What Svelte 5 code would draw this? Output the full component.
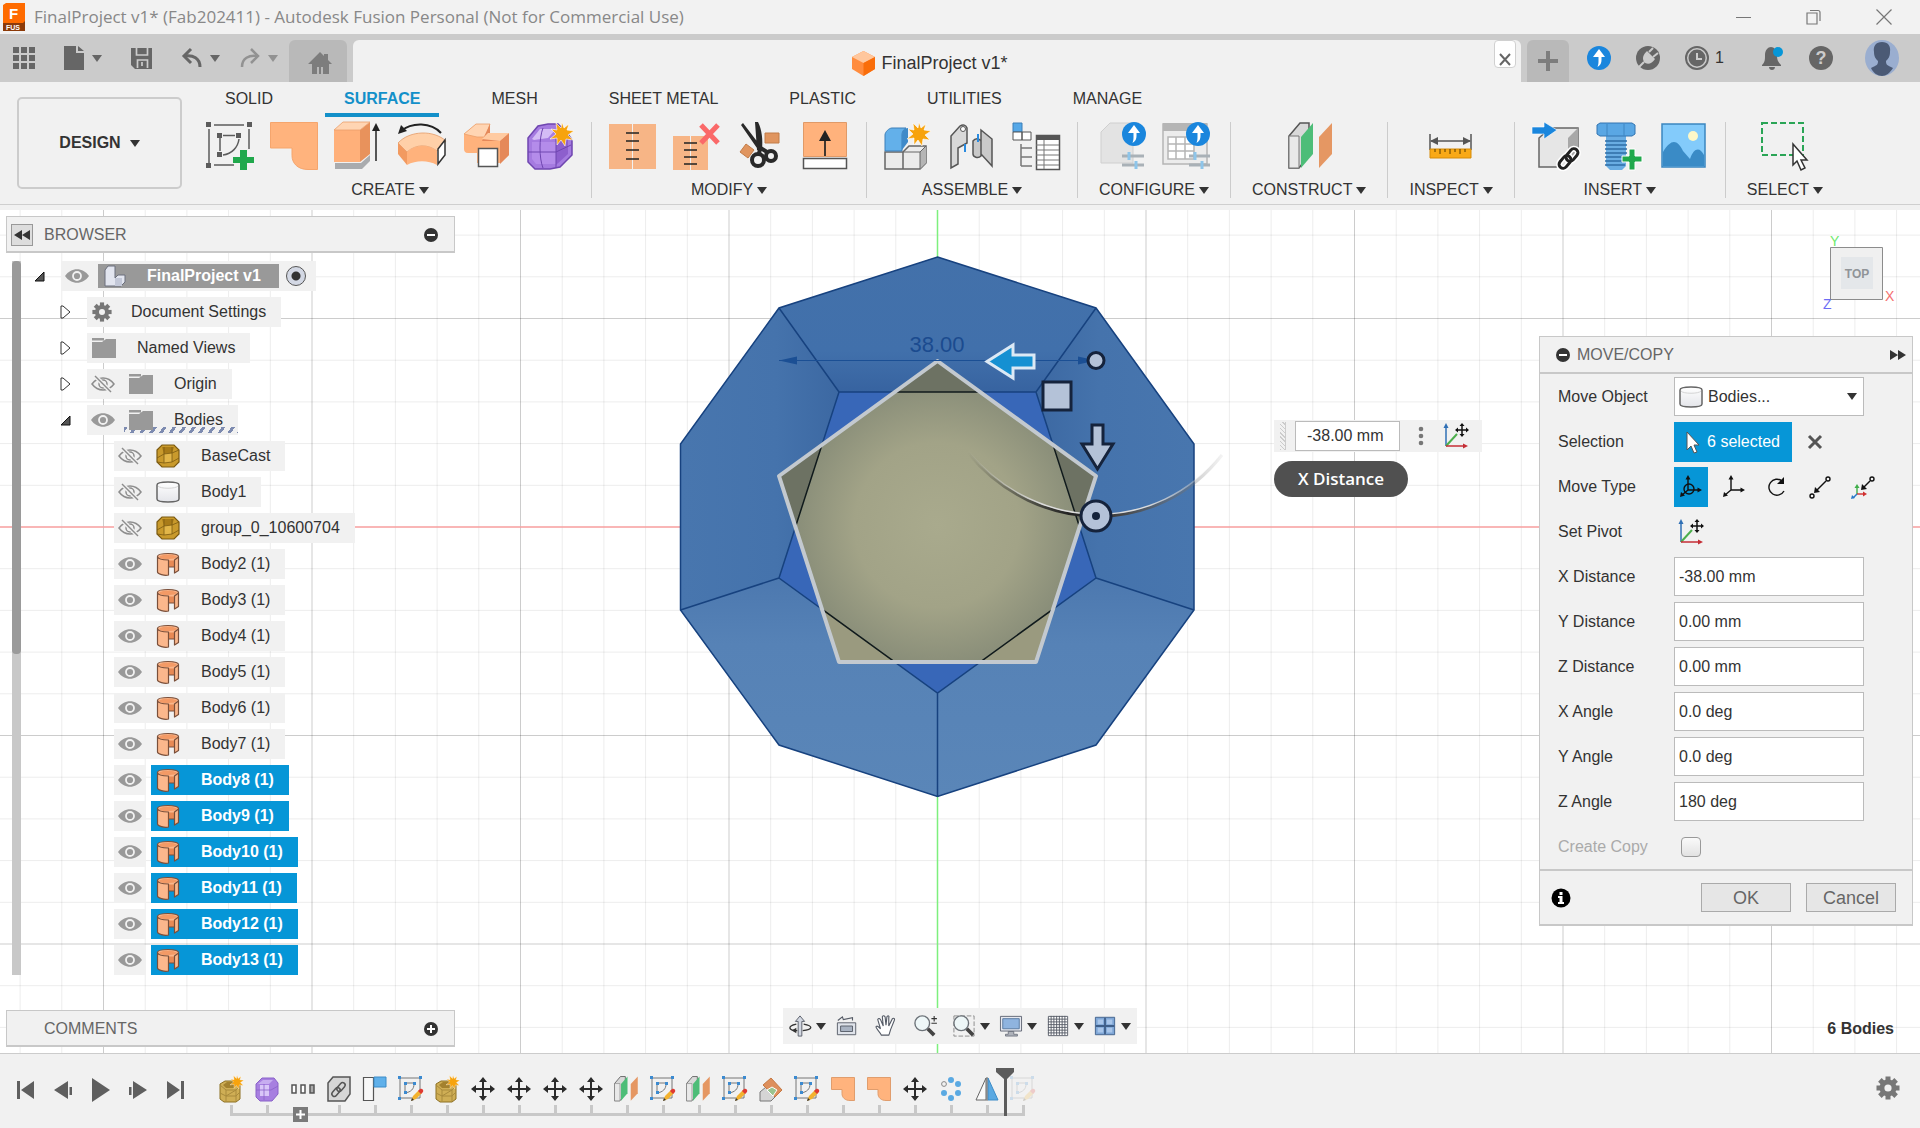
<script>
	const tabs = ['SOLID', 'SURFACE', 'MESH', 'SHEET METAL', 'PLASTIC', 'UTILITIES', 'MANAGE'];
	let activeTab = $state('SURFACE');

	const groups = [
		{ name: 'CREATE', tools: ['sketch', 'patch', 'extrude', 'revolve', 'loft', 'form'] },
		{ name: 'MODIFY', tools: ['stitch', 'unstitch', 'trim', 'extend'] },
		{ name: 'ASSEMBLE', tools: ['component', 'joint', 'bom'] },
		{ name: 'CONFIGURE', tools: ['config', 'configTable'] },
		{ name: 'CONSTRUCT', tools: ['plane'] },
		{ name: 'INSPECT', tools: ['measure'] },
		{ name: 'INSERT', tools: ['derive', 'fastener', 'decal'] },
		{ name: 'SELECT', tools: ['select'] }
	];

	const tree = [
		{ name: 'Document Settings', level: 1, arrow: 'closed', icon: 'gear' },
		{ name: 'Named Views', level: 1, arrow: 'closed', icon: 'folder' },
		{ name: 'Origin', level: 1, arrow: 'closed', eye: 'off', icon: 'folder' },
		{ name: 'Bodies', level: 1, arrow: 'open', eye: 'on', icon: 'folder', marked: true },
		{ name: 'BaseCast', level: 2, eye: 'off', icon: 'mesh' },
		{ name: 'Body1', level: 2, eye: 'off', icon: 'solid' },
		{ name: 'group_0_10600704', level: 2, eye: 'off', icon: 'mesh' },
		...Array.from({ length: 12 }, (_, i) => ({
			name: `Body${i + 2} (1)`,
			level: 2,
			eye: 'on',
			icon: 'surface',
			selected: i >= 6
		}))
	];

	const moveTypes = ['free', 'translate', 'rotate', 'pointToPoint', 'pointToPosition'];
	let moveType = $state('free');

	let fields = $state([
		{ id: 'x-distance', label: 'X Distance', value: '-38.00 mm' },
		{ id: 'y-distance', label: 'Y Distance', value: '0.00 mm' },
		{ id: 'z-distance', label: 'Z Distance', value: '0.00 mm' },
		{ id: 'x-angle', label: 'X Angle', value: '0.0 deg' },
		{ id: 'y-angle', label: 'Y Angle', value: '0.0 deg' },
		{ id: 'z-angle', label: 'Z Angle', value: '180 deg' }
	]);

	const navTools = [
		{ name: 'orbit', menu: true },
		{ name: 'lookat' },
		{ name: 'pan' },
		{ name: 'zoom' },
		{ name: 'fit', menu: true },
		{ name: 'display', menu: true },
		{ name: 'grid', menu: true },
		{ name: 'views', menu: true }
	];

	const playback = ['first', 'prev', 'play', 'next', 'last'];

	const timeline = [
		'meshNew', 'formSmall', 'group', 'link', 'flag', 'sketchEdit', 'meshNew',
		'move', 'move', 'move', 'move', 'planeSmall', 'sketchEdit', 'planeSmall',
		'sketchEdit', 'replace', 'sketchEdit', 'patchSmall', 'patchSmall', 'move',
		'pattern', 'mirror', 'sketchEdit'
	];

	// grid lines run from the origin outwards, every fifth one is a major line
	const step = 41.7;
	const lines = Array.from({ length: 81 }, (_, i) => i - 40);
</script>

{#snippet caret()}
	<span class="caret"></span>
{/snippet}

{#snippet star(x, y, r)}
	<g transform="translate({x} {y}) scale({r / 12})">
		<path d="M0-12 2-6 7-10 5-4 12-3 6 1 11 6 4 5 3 12-1 6-5 11-5 4-12 5-6 0-11-5-5-4-6-11-1-6z" fill="#f7a30d" stroke="#fff" stroke-width="0.6" />
	</g>
{/snippet}

{#snippet tool(name)}
	<svg width="48" height="48" viewBox="0 0 48 48" aria-hidden="true">
		{#if name === 'sketch'}
			<path d="M3 7v34M8 3h30M43 7v20M8 43h20M14 15v14M17 13.500h12M33 17c-1 8-7 15-16 16" fill="none" stroke="#5c5c5c" stroke-width="1.500" />
			<path d="M0 0h5v5H0zM41 0h5v5h-5zM0 41h5v5H0zM11 11h5v5h-5zM30 11h5v5h-5zM11 30h5v5h-5z" fill="#5c5c5c" />
			<path d="M34 28h7v7h7v6h-7v7h-7v-7h-7v-6h7z" fill="#20a84c" />
		{:else if name === 'patch'}
			<path d="M.5.5h47v47H38c-10 0-16-6-16-14V26H.5z" fill="#ffb37d" stroke="#f5a56d" />
		{:else if name === 'extrude'}
			<path d="M1 41h26l9-8v6l-8 8H1z" fill="#a9abae" />
			<path d="M0 8h26v32H0z" fill="#ffb07a" />
			<path d="M26 8 36 0v32l-10 8z" fill="#e8925c" />
			<path d="M0 8 9 0h27l-10 8z" fill="#ffd5b3" stroke="#eb9f6b" stroke-width=".8" />
			<path d="M42 39V6" stroke="#222" stroke-width="1.500" />
			<path d="M42 1l4 8h-8z" fill="#222" />
		{:else if name === 'revolve'}
			<path d="M0 21c12-13 36-13 48-2l-9 10C30 22 18 22 9 30z" fill="#ffd0a8" stroke="#e59a66" stroke-width=".8" />
			<path d="M9 30c9-8 21-8 30-1v14c-9-5-21-5-30 0z" fill="#ffb27c" />
			<path d="M0 21l9 9v13l-9-11z" fill="#f29a60" />
			<path d="M40 27l7-9v15l-7 9z" fill="#fff" stroke="#333" stroke-width="1.500" />
			<path d="M3 9C14 0 33 0 43 11" fill="none" stroke="#222" stroke-width="2" />
			<path d="M0 12 3 3l6 6z" fill="#222" />
		{:else if name === 'loft'}
			<path d="M2 12 14 2h14l-4 12h14l9-3v22l-9 8H15V31H6c-3 0-4-2-4-4z" fill="#ffb27c" />
			<path d="M2 12 14 2h14l-4 12 4 1H15z" fill="#ffd5b3" stroke="#eb9f6b" stroke-width=".8" />
			<path d="M28 2v9l-6 6h18l7-6v22l-9 9V19H20z" fill="#e5895a" />
			<path d="M20 17 26 11h21l-9 8z" fill="#ffcba2" />
			<path d="M16.500 26.500h19v18h-19z" fill="#fff" stroke="#555" stroke-width="1.500" />
		{:else if name === 'form'}
			<path d="M2 16 12 4l10-2h10l10 10 4 6v15l-12 12-10 2H9L2 40z" fill="#a57be0" stroke="#6f46b0" stroke-width="1.500" />
			<path d="M6 17 14 7h16l-8 9-14 2z" fill="#d4bcf5" />
			<path d="M6 20h24v22H10l-4-5z" fill="#b48cea" />
			<path d="M30 18l12-4v18L30 43" fill="#8d5fcd" />
			<path d="M2 30h28l15-7M17 6c-4 10-4 30 0 40M30 16v30" fill="none" stroke="#6f46b0" />
			{@render star(36, 12, 12)}
		{:else if name === 'stitch'}
			<path d="M0 2h23v45H0zM24 2h23v45H24z" fill="#f7b586" />
			<path d="M17 11h13M17 19h13M17 28h13M17 37h13" stroke="#222" stroke-width="1.700" />
		{:else if name === 'unstitch'}
			<path d="M0 14h17v34H0zM18 14h17v34H18z" fill="#f7b586" />
			<path d="M11 21h13M11 28h13M11 35h13M11 42h13" stroke="#222" stroke-width="1.700" />
			<path d="M28 3 45 21M45 3 28 21" stroke="#fa6969" stroke-width="5" />
		{:else if name === 'trim'}
			<path d="M28 11h14v10H28z" fill="#e0955f" stroke="#c27c48" />
			<path d="M9 22l8 6-6 8-8-6z" fill="#e0955f" stroke="#c27c48" />
			<path d="M18 0h3c4 8 5 18 4 28h-5zM4 3l2-2 16 21v7z" fill="#292929" />
			<circle cx="21" cy="38" r="6" fill="none" stroke="#292929" stroke-width="4" />
			<circle cx="34" cy="34" r="5" fill="none" stroke="#292929" stroke-width="4" />
			<path d="M22 25l8 5M23 25l-1 8" stroke="#292929" stroke-width="4" />
		{:else if name === 'extend'}
			<path d="M2.500.5h43v34h-43z" fill="#ffb27c" stroke="#e09a68" />
			<path d="M2.500 36.500h43v10h-43z" fill="#fff" stroke="#555" stroke-width="1.500" />
			<path d="M24 34V14" stroke="#222" stroke-width="1.700" />
			<path d="M24 8l6 11H18z" fill="#222" />
		{:else if name === 'component'}
			<path d="M1 30h18v17H1zM19 30l6-6h17v17l-6 6H19z" fill="#ebebeb" stroke="#666" stroke-width="1.500" />
			<path d="M36 30l6-6v17l-6 6z" fill="#b5b5b5" />
			<path d="M19 30h17v17M36 30l6-6" fill="none" stroke="#666" />
			<path d="M1 29V13c0-3 4-7 7-7h14c-3 2-4 4-4 7v16z" fill="#63b0ea" stroke="#3c7fb8" />
			<path d="M18 13c0-4 2-7 6-7v14l-6 8z" fill="#3f8ac9" />
			{@render star(35, 12, 12)}
		{:else if name === 'joint'}
			<path d="M3 40V14L12 4c3-2 6-1 7 2v15l-9 5v16l-7 4z" fill="#d8d8d8" stroke="#555" stroke-width="1.500" />
			<path d="M44 44 33 32V8l11 9zM33 34c-3 3-8 1-8-2V19c2-3 6-3 8 0z" fill="#c9c9c9" stroke="#555" stroke-width="1.500" />
			<path d="M17 22v8M30 12v8" stroke="#2a8be0" stroke-width="2" />
			<circle cx="15" cy="7" r="2.500" fill="#fff" stroke="#555" />
		{:else if name === 'bom'}
			<path d="M1 1h9v9H1z" fill="#55a8e8" stroke="#3c7fb8" />
			<path d="M1 10h9v8H1zM10 10h9v8h-9z" fill="#fff" stroke="#555" />
			<path d="M9 22v22M9 26h11M9 35h11M9 44h11" stroke="#777" stroke-width="1.500" fill="none" />
			<path d="M24.500 13.500h23v34h-23z" fill="#fff" stroke="#555" stroke-width="1.500" />
			<path d="M24 13h24v5H24z" fill="#555" />
			<path d="M32 18v29M24 23h23M24 28h23M24 33h23M24 38h23M24 43h23" stroke="#777" />
		{:else if name === 'config'}
			<path d="M3 10 12 1h29l-6 9v31H3z" fill="#e3e3e3" stroke="#cfcfcf" />
			<path d="M24 34h22M24 43h22" stroke="#a9b1b7" stroke-width="3" />
			<path d="M31 30v8M38 39v8" stroke="#8ec5ea" stroke-width="3" />
			{@render update(36, 12)}
		{:else if name === 'configTable'}
			<path d="M1 2h44v40H1z" fill="#ececec" stroke="#b5b5b5" stroke-width="1.500" />
			<path d="M1 1h44v8H1z" fill="#b5b5b5" />
			<path d="M6 15h26v22H6zM6 22h26M6 29h26M14 15v22M23 15v22" fill="#fff" stroke="#b5b5b5" stroke-width="1.500" />
			<path d="M27 34h21M27 43h21" stroke="#a9b1b7" stroke-width="3" />
			<path d="M33 30v8M40 39v8" stroke="#8ec5ea" stroke-width="3" />
			{@render update(36, 12)}
		{:else if name === 'plane'}
			<g transform="translate(3)">{@render planeShape()}</g>
		{:else if name === 'measure'}
			<path d="M3 12v16M44 12v16M4 19h39" stroke="#555" stroke-width="1.500" />
			<path d="M3 19l8-4v8zM44 19l-8-4v8z" fill="#555" />
			<path d="M3 27h41v9H3z" fill="#f9a916" stroke="#d58b08" />
			<path d="M8 27v3M13 27v5M18 27v3M23 27v5M28 27v3M33 27v5M38 27v3" stroke="#553a00" />
		{:else if name === 'derive'}
			<path d="M7 16 18 6h28v29l-10 10H7z" fill="#e6e6e6" stroke="#666" stroke-width="1.500" />
			<path d="M36 16 46 6v29L36 45z" fill="#a8a8a8" />
			<path d="M0 5h12V0l13 8-13 9v-5H0z" fill="#1a86dd" stroke="#fff" stroke-width=".6" />
			<g fill="none" stroke="#fff" stroke-width="6"><rect x="-7" y="-4" width="14" height="8" rx="4" transform="translate(33 40) rotate(-50)" /><rect x="-7" y="-4" width="14" height="8" rx="4" transform="translate(40 33) rotate(-50)" /></g>
			<g fill="none" stroke="#222" stroke-width="3"><rect x="-7" y="-4" width="14" height="8" rx="4" transform="translate(33 40) rotate(-50)" /><rect x="-7" y="-4" width="14" height="8" rx="4" transform="translate(40 33) rotate(-50)" /></g>
		{:else if name === 'fastener'}
			<path d="M10 14h20v30l-4 4H14l-4-4z" fill="#69ade3" />
			<path d="M9 19h22M9 23h22M9 27h22M9 31h22M9 35h22M9 39h22M9 43h20" stroke="#2f6da6" stroke-width="1.500" />
			<path d="M1 3l3-2h32l3 2v9l-3 2H4l-3-2z" fill="#5aa7e4" stroke="#3375b1" />
			<path d="M11 2v12M28 2v12" stroke="#3f86c2" />
			<path d="M33 27h6v7h7v6h-7v8h-6v-8h-7v-6h7z" fill="#20a84c" stroke="#fff" stroke-width="1" />
		{:else if name === 'decal'}
			<path d="M2 2h43v43H2z" fill="#83cbfb" stroke="#3b86c0" stroke-width="1.500" />
			<path d="M3 30c8-13 14-13 20-1l7 8c4-12 10-12 14-4v11H3z" fill="#3a8bc6" />
			<circle cx="33" cy="14" r="5" fill="#fdf8c8" />
		{:else if name === 'select'}
			<path d="M1 1h41v32H1z" fill="none" stroke="#2aa556" stroke-width="2" stroke-dasharray="6 3" />
			<path d="M32 22v21l4-4 4 9 4-2-4-8h6z" fill="#fff" stroke="#333" stroke-width="1.500" />
		{/if}
	</svg>
{/snippet}

{#snippet update(x, y)}
	<circle cx={x} cy={y} r="12" fill="#1a86dd" />
	<path d="M{x} {y - 9}l6 8h-3.500v3c0 3-1 5-4 7 1-3 1-4 1-7v-3h-5.500z" fill="#fff" />
{/snippet}

{#snippet planeShape()}
	<path d="M1 14 12 1h9v32L11 46H1z" fill="#d9d9d9" stroke="#555" stroke-width="1.500" />
	<path d="M1 14h10v32H1z" fill="#e9e9e9" stroke="#777" />
	<path d="M13 15 25 1v31L13 46z" fill="#4dbd78" />
	<path d="M31 15 44 1v31L31 46z" fill="#e59763" />
{/snippet}

{#snippet gear(size)}
	<svg width={size} height={size} viewBox="-12 -12 24 24" aria-hidden="true">
		<g fill="#777">
			{#each [0, 45, 90, 135] as angle}
				<rect x="-2.500" y="-11.500" width="5" height="23" transform="rotate({angle})" />
			{/each}
			<circle r="8.500" />
		</g>
		<circle r="3.600" fill="#f1f1f1" />
	</svg>
{/snippet}

{#snippet eye(kind)}
	<svg width="24" height="20" viewBox="0 0 24 20" aria-hidden="true">
		{#if kind === 'on'}
			<path d="M0 10C6 1 18 1 24 10 18 19 6 19 0 10z" fill="#999" />
			<circle cx="12" cy="10" r="4" fill="none" stroke="#f1f1f1" stroke-width="1.800" />
		{:else}
			<path d="M1 10C7 2 17 2 23 10 17 18 7 18 1 10z" fill="none" stroke="#8d8d8d" stroke-width="1.500" />
			<circle cx="12" cy="10" r="4" fill="none" stroke="#8d8d8d" stroke-width="1.500" />
			<path d="M4 2l16 16" stroke="#f1f1f1" stroke-width="4" />
			<path d="M4 2l16 16" stroke="#8d8d8d" stroke-width="1.500" />
		{/if}
	</svg>
{/snippet}

{#snippet nodeIcon(name)}
	{#if name === 'gear'}
		{@render gear(20)}
	{:else}
		<svg width="24" height="24" viewBox="0 0 24 24" aria-hidden="true">
			{#if name === 'folder'}
				<path d="M0 2h12v2.500H0zM0 6h10l4-3h10v19H0z" fill="#999" />
			{:else if name === 'mesh'}
				<path d="M1 6 6 1h12l5 5v12l-5 5H6l-5-5z" fill="#c99a2c" stroke="#7b5a12" stroke-width="1.200" />
				<path d="M6 3h12l-2 6-8 1z" fill="#a87b18" />
				<path d="M8 10l8-1v9l-8 1z" fill="#e2b649" />
				<path d="M8 3v16M16 3v15M1 14l7-4 8-1 7-3M1 18l7 1 8-1 7-4" stroke="#7b5a12" stroke-width=".8" fill="none" />
			{:else if name === 'solid'}
				{@render solidShape()}
			{:else}
				<path d="M1.500 4.500c0-4 21-4 21 0v14l-4 2.500v-6h-6v8c-4 1-11-1-11-3z" fill="#fbb78c" />
				<path d="M12.500 8.500h6V15h-6z" fill="#e88a55" />
				<path d="M3 5c2-3 16-3 18 0-1 1-4 2-8 2C8 7 4 7 3 5z" fill="#f39a66" />
				<path d="M1.500 4.500c0-4 21-4 21 0v14l-4 2.500V8l4-3M1.500 4.500C2 7 8 8 12.500 8v15c-4 1-11-1-11-3zM12.500 15h6" fill="none" stroke="#7a4f3a" stroke-width="1.200" stroke-linejoin="round" />
			{/if}
		</svg>
	{/if}
{/snippet}

{#snippet solidShape()}
	<defs>
		<linearGradient id="cyl" x1="0" x2="0" y1="0" y2="1">
			<stop offset="0" stop-color="#fff" />
			<stop offset="1" stop-color="#e4e5ea" />
		</linearGradient>
	</defs>
	<path d="M1 5c0-4 22-4 22 0v14c0 4-22 4-22 0z" fill="url(#cyl)" stroke="#666" stroke-width="1.500" />
	<path d="M2 6c2 3 18 3 20 0" fill="none" stroke="#d5d5d5" />
{/snippet}

{#snippet axes()}
	<svg width="28" height="26" viewBox="0 0 28 26" aria-hidden="true">
		<path d="M4 23V4" stroke="#2f6fb5" stroke-width="1.500" />
		<path d="M4 0l2.500 5h-5z" fill="#2f6fb5" />
		<path d="M4 23 15 11" stroke="#4cae4c" stroke-width="2" />
		<path d="M4 23h18" stroke="#c42d35" stroke-width="1.500" />
		<path d="M26 23l-5-2.500v5z" fill="#c42d35" />
		<path d="M20 1v12M14 7h12" stroke="#111" stroke-width="1.500" />
		<path d="M20 0l2.500 3h-5zM20 14l2.500-3h-5zM13 7l3-2.500v5zM27 7l-3-2.500v5z" fill="#111" />
	</svg>
{/snippet}

{#snippet typeIcon(name)}
	<svg width="24" height="26" viewBox="0 0 24 26" aria-hidden="true">
		<g fill="none" stroke="#111" stroke-width="1.400">
			{#if name === 'free' || name === 'translate'}
				<path d="M9 16V4M9 16h11M9 16l-6 5" />
				<path d="M9 1l2.500 4.500h-5zM23 16l-4.500-2.500v5zM1 23l1-5 4 3.500z" fill="#111" stroke="none" />
				{#if name === 'free'}
					<circle cx="10" cy="15" r="5" />
				{/if}
			{:else if name === 'rotate'}
				<path d="M17 7A8 8 0 1 0 19 17" />
				<path d="M19 3v7h-7z" fill="#111" stroke="none" />
			{:else if name === 'pointToPoint'}
				<circle cx="20" cy="5" r="2" />
				<circle cx="4" cy="22" r="2" />
				<path d="M18 7 9 16" />
				<path d="M6 19l1-6 5 5z" fill="#111" stroke="none" />
			{:else}
				<circle cx="21" cy="5" r="2" />
				<path d="M19 7l-6 6" />
				<path d="M10 16l1-6 5 5z" fill="#111" stroke="none" />
				<path d="M6 12v8" stroke="#3fae49" />
				<path d="M6 10l2.500 4h-5z" fill="#3fae49" stroke="none" />
				<path d="M6 20h7" stroke="#d03030" />
				<path d="M16 20l-4-2.500v5z" fill="#d03030" stroke="none" />
				<path d="M6 20l-4 4" stroke="#2878c8" />
				<path d="M0 25l1-4 3 3z" fill="#2878c8" stroke="none" />
			{/if}
		</g>
	</svg>
{/snippet}

{#snippet navIcon(name)}
	<svg width="22" height="24" viewBox="0 0 24 24" aria-hidden="true">
		{#if name === 'orbit'}
			<path d="M10 23V7H7l5-6 5 6h-3v16z" fill="#d3d8e2" stroke="#555b66" />
			<path d="M8 10C-2 12-1 17 9 17M15 17c11-1 12-5 1-7" fill="none" stroke="#333" stroke-width="1.500" />
			<path d="M3 17l5-3v6z" fill="#333" />
		{:else if name === 'lookat'}
			<path d="M1.500 8.500h20v13h-20z" fill="#dfe3ea" stroke="#555b66" />
			<path d="M5 12h13v6H5z" fill="#a9b3c2" stroke="#555b66" />
			<path d="M2 6l5-4 1 3 10-2v3" fill="none" stroke="#555b66" stroke-width="1.200" />
		{:else if name === 'pan'}
			<path d="M7 22c-2-4-5-6-6-9 1-2 3 0 5 2L3 5c1-2 2-1 3 0l3 7L8 2c1-2 2-1 3 0l1 9 1-9c1-2 3-1 2 1l0 9 4-8c1-1 3 0 2 2l-4 10c-1 3-1 4-2 6z" fill="#fff" stroke="#555b66" stroke-width="1.200" />
		{:else if name === 'zoom' || name === 'fit'}
			{#if name === 'fit'}
				<path d="M1 1h22v22H1z" fill="none" stroke="#888" stroke-dasharray="5 2" />
			{/if}
			<path d="M15 15l7 7" stroke="#444" stroke-width="4" />
			<circle cx="9" cy="9" r="8" fill="#eef7f8" stroke="#6c7278" stroke-width="1.500" />
			{#if name === 'zoom'}
				<path d="M19 4h6M22 1v6M19 9h6" stroke="#333" stroke-width="1.200" />
			{/if}
		{:else if name === 'display'}
			<path d="M.5 1.500h23v16H.5z" fill="#e6e8ef" stroke="#5d6371" />
			<path d="M3 4h18v11H3z" fill="#8fb4df" stroke="#57789f" />
			<path d="M9 18h6v3h4v2H6v-2h3z" fill="#aeb2ba" stroke="#5d6371" stroke-width=".8" />
		{:else if name === 'grid'}
			<path d="M1.500 1.500h21v21h-21zM4.500 1v21M7.500 1v21M10.500 1v21M13.500 1v21M16.500 1v21M19.500 1v21M1 4.500h21M1 7.500h21M1 10.500h21M1 13.500h21M1 16.500h21M1 19.500h21" fill="#fff" stroke="#555b66" />
		{:else}
			<path d="M1.500 2.500h21v19h-21z" fill="#7ea6d6" stroke="#3f5f8a" />
			<path d="M12 3v18M2 12h20" stroke="#3f5f8a" stroke-width="2" />
			<path d="M4 5h6v5H4zM14 5h6v5h-6zM4 14h6v5H4zM14 14h6v5h-6z" fill="#a9c6ea" />
		{/if}
	</svg>
{/snippet}

{#snippet playIcon(name)}
	<svg width="20" height="24" viewBox="0 0 20 24" fill="#5f5f5f" aria-hidden="true">
		{#if name === 'first'}
			<path d="M2 3h3v18H2zM19 3v18L6 12z" />
		{:else if name === 'prev'}
			<path d="M15 3v18L1 12zM16.500 9H19v8h-2.500z" />
		{:else if name === 'play'}
			<path d="M1 0v24l18-12z" />
		{:else if name === 'next'}
			<path d="M4 3v18l14-9zM0 9h2.500v8H0z" />
		{:else}
			<path d="M0 3v18l13-9zM14 3h3v18h-3z" />
		{/if}
	</svg>
{/snippet}

{#snippet timelineIcon(name)}
	<svg width="26" height="26" viewBox="0 0 26 26" aria-hidden="true">
		{#if name === 'meshNew'}
			<path d="M2 8l5-3h11l4 4v14l-4 3H6l-4-3z" fill="#cfae55" stroke="#8d7023" />
			<path d="M2 9l6 5h10l4-4M2 17l6 3h10l4-4M8 14v11M18 14v11M8 20l10-6" fill="none" stroke="#a98a3c" />
			<path d="M5 9l4-3h7l3 3-3 3H8z" fill="#a3812e" />
			{@render star(19, 6, 7)}
		{:else if name === 'formSmall'}
			<path d="M2 8l6-6h12l4 5v11l-6 7H6l-4-4z" fill="#a77fe0" stroke="#8a62c9" />
			<path d="M6 9h9v11H6z" fill="#d9c6f8" />
			<path d="M4 8l5-4h10l-4 4z" fill="#c7adf0" />
			<path d="M2 14h15l7-4M10 8v16" stroke="#8a62c9" stroke-width=".8" fill="none" />
		{:else if name === 'group'}
			<path d="M2 9h4v8H2zM11 9h4v8h-4z" fill="#fff" stroke="#555" stroke-width="1.500" />
			<path d="M20 9h4v8h-4z" fill="#aaa" stroke="#555" stroke-width="1.500" />
		{:else if name === 'link'}
			<path d="M2 7 7 1h17v17l-5 7H2z" fill="#d6d6d6" stroke="#555" stroke-width="1.500" />
			<g fill="none" stroke="#555" stroke-width="1.500">
				<rect x="-5" y="-2.500" width="10" height="5" rx="2.500" transform="translate(10 16) rotate(-50)" />
				<rect x="-5" y="-2.500" width="10" height="5" rx="2.500" transform="translate(15 11) rotate(-50)" />
			</g>
		{:else if name === 'flag'}
			<path d="M1.500 1.500h10v23h-10z" fill="#f8f8f8" stroke="#555" stroke-width="1.200" />
			<path d="M12 1h12v10H12z" fill="#5fb0ea" stroke="#3c8cc8" />
		{:else if name === 'sketchEdit'}
			<path d="M2 2h20v20H2zM7 7v9M9 7h8M16 8c0 5-3 8-9 9" fill="none" stroke="#777" />
			<path d="M0 0h3v3H0zM21 0h3v3h-3zM0 21h3v3H0zM6 6h3v3H6zM15 6h3v3h-3zM6 15h3v3H6z" fill="#3b8ad0" />
			<path d="M13 25l2-5 6-6 3 3-6 6z" fill="#f3b22f" />
			<path d="M20 15l2-2c2-1 4 1 3 3l-2 2z" fill="#df3a32" />
			<path d="M13 25l1-3 2 2z" fill="#333" />
		{:else if name === 'move'}
			<path d="M13 3v20M3 13h20" stroke="#2b2b2b" stroke-width="2" />
			<path d="M13 1l4 5H9zM13 25l4-5H9zM1 13l5-4v8zM25 13l-5-4v8z" fill="#2b2b2b" />
		{:else if name === 'planeSmall'}
			<g transform="scale(.54)">{@render planeShape()}</g>
		{:else if name === 'replace'}
			<path d="M2 16l6-5h10v9l-5 5H2z" fill="#d5d5d5" stroke="#777" />
			<path d="M13 2l11 12-7 7L5 9z" fill="#dd8f5c" stroke="#c67943" />
			<path d="M9 14l5-3 5 3-4 6z" fill="#9bc48f" stroke="#fff" />
		{:else if name === 'patchSmall'}
			<path d="M1.500 1.500h23v23H20c-5 0-8-3-8-7v-4H1.500z" fill="#ffb37d" stroke="#e09d6d" />
		{:else if name === 'pattern'}
			<g fill="#5aa9e2">
				<circle cx="13" cy="4" r="3" /><circle cx="20" cy="8" r="3" /><circle cx="20" cy="17" r="3" />
				<circle cx="13" cy="22" r="3" /><circle cx="6" cy="17" r="3" />
			</g>
			<circle cx="6" cy="8" r="2.400" fill="#f1f1f1" stroke="#888" />
		{:else if name === 'mirror'}
			<path d="M12 2v22H2z" fill="#fafafa" stroke="#666" />
			<path d="M14 2v22h10z" fill="#5aa9e2" stroke="#3c8cc8" />
			<path d="M13 1v24" stroke="#666" />
		{/if}
	</svg>
{/snippet}

<div class="app">
	<header class="titlebar">
		<svg width="24" height="30" viewBox="0 0 24 30" aria-hidden="true">
			<path d="M1 3 4 1h19v20H1z" fill="#ff6b00" />
			<path d="M1 21h20l2-2v10H1z" fill="#8c3a08" />
			<text x="7" y="17" font-size="15" font-weight="700" fill="#fff">F</text>
			<text x="4" y="28" font-size="7" font-weight="700" fill="#fff">FUS</text>
		</svg>
		<h1>FinalProject v1* (Fab202411) - Autodesk Fusion Personal (Not for Commercial Use)</h1>
		<div class="window-buttons">
			<button aria-label="Minimize"><svg width="18" height="18" viewBox="0 0 18 18"><path d="M1 9.500h15" stroke="#777" /></svg></button>
			<button aria-label="Restore"><svg width="18" height="18" viewBox="0 0 18 18"><path d="M2 5h10v11H2zM5 2.500h8c1 0 2 1 2 2V13" fill="none" stroke="#777" stroke-width="1.200" /></svg></button>
			<button aria-label="Close"><svg width="18" height="18" viewBox="0 0 18 18"><path d="M1.500 1.500l15 15M16.500 1.500l-15 15" stroke="#777" stroke-width="1.200" /></svg></button>
		</div>
	</header>

	<div class="docbar">
		<div class="quick">
			<button aria-label="Data panel">
				<svg width="22" height="22" viewBox="0 0 22 22" fill="#666"><path d="M0 0h6v6H0zM8 0h6v6H8zM16 0h6v6h-6zM0 8h6v6H0zM8 8h6v6H8zM16 8h6v6h-6zM0 16h6v6H0zM8 16h6v6H8zM16 16h6v6h-6z" /></svg>
			</button>
			<button aria-label="File">
				<svg width="20" height="24" viewBox="0 0 20 24" fill="#666"><path d="M0 0h12v7h8v17H0zM14 0l6 5h-6z" /></svg>
				{@render caret()}
			</button>
			<button aria-label="Save">
				<svg width="22" height="22" viewBox="0 0 22 22"><path d="M0 1h21v21H4l-4-4z" fill="#666" /><path d="M5.500 1v7h11V1M6.500 21v-8h10v8M11 15v4" fill="none" stroke="#ccc" stroke-width="1.700" /></svg>
			</button>
			<div class="history">
				<button aria-label="Undo">
					<svg width="20" height="20" viewBox="0 0 20 20"><path d="M3 8c8-1 15 2 15 11" fill="none" stroke="#666" stroke-width="3" /><path d="M9 1 2 8l7 7" fill="none" stroke="#666" stroke-width="3" /></svg>
					{@render caret()}
				</button>
				<button class="dim" aria-label="Redo">
					<svg width="20" height="20" viewBox="0 0 20 20"><path d="M17 8C9 7 2 10 2 19" fill="none" stroke="#929292" stroke-width="2.500" /><path d="M11 1l7 7-7 7" fill="none" stroke="#929292" stroke-width="2.500" /></svg>
					{@render caret()}
				</button>
			</div>
		</div>
		<button class="home-tab" aria-label="Home">
			<svg width="24" height="22" viewBox="0 0 24 22" fill="#7d7d7d"><path d="M12 0l4 4V2h4v6l4 4h-3v10h-6v-7h-2v7h-2v-7H9v7H4V12H0z" /></svg>
		</button>
		<div class="doc-tab">
			<div class="doc-name">
				<svg width="23" height="25" viewBox="0 0 23 25"><path d="M11.500 0 23 6v12l-11.500 7L0 18V6z" fill="#ff8c3e" /><path d="M11.500 0 23 6l-11.500 6L0 6z" fill="#ffc79d" /><path d="M11.500 12 23 6v12l-11.500 7z" fill="#f96d0a" /></svg>
				FinalProject v1*
			</div>
			<button class="doc-close" aria-label="Close tab">
				<svg width="12" height="14" viewBox="0 0 12 14"><path d="M1 1l10 11M11 1 1 12" stroke="#666" stroke-width="2" /></svg>
			</button>
		</div>
		<button class="new-tab" aria-label="New design">
			<svg width="20" height="20" viewBox="0 0 20 20"><path d="M10 0v20M0 10h20" stroke="#7d7d7d" stroke-width="4" /></svg>
		</button>
		<div class="account">
			<button aria-label="Updates">
				<svg width="24" height="24" viewBox="0 0 24 24">{@render update(12, 12)}</svg>
			</button>
			<button aria-label="Extensions">
				<svg width="24" height="24" viewBox="0 0 24 24"><circle cx="12" cy="12" r="12" fill="#666" /><path d="M3 21l5-5M13 6l4-4M17 11l5-4" stroke="#ccc" stroke-width="2" /><path d="M8 16c-2-4-1-7 3-11l8 8c-3 5-8 6-11 3z" fill="#ccc" /></svg>
			</button>
			<button aria-label="Job status">
				<svg width="24" height="24" viewBox="0 0 24 24"><circle cx="12" cy="12" r="11" fill="none" stroke="#666" stroke-width="2" /><circle cx="12" cy="12" r="8.500" fill="#666" /><path d="M12 7v6h5" stroke="#ccc" stroke-width="2" fill="none" /></svg>
				1
			</button>
			<button class="bell" aria-label="Notifications">
				<svg width="24" height="24" viewBox="0 0 24 24"><path d="M2 19c3-3 3-5 3-10 0-5 3-8 6-8s6 3 6 8 1 7 4 10v1H2zM9 21h6c0 4-6 4-6 0z" fill="#666" /><circle cx="18" cy="6" r="5" fill="#0696d7" /></svg>
			</button>
			<button aria-label="Help">
				<svg width="24" height="24" viewBox="0 0 24 24"><circle cx="12" cy="12" r="12" fill="#666" /><text x="12" y="18" font-size="18" font-weight="700" fill="#ccc" text-anchor="middle">?</text></svg>
			</button>
			<button class="avatar" aria-label="Account">
				<svg width="34" height="36" viewBox="0 0 34 36"><ellipse cx="17" cy="18" rx="17" ry="18" fill="#9aaed0" /><path d="M17 2c6 0 9 4 8 10 0 5-2 7-4 9 0 4 1 4 7 7-3 5-7 8-11 8s-9-3-11-8c6-3 7-3 7-7-2-2-4-4-4-9-1-6 2-10 8-10z" fill="#4b5a75" /></svg>
			</button>
		</div>
	</div>

	<div class="ribbon">
		<button class="workspace">DESIGN {@render caret()}</button>
		<div class="ribbon-main">
			<nav class="tabs">
				{#each tabs as tab}
					<button class:active={tab === activeTab} onclick={() => (activeTab = tab)}>{tab}</button>
				{/each}
			</nav>
			<div class="groups">
				{#each groups as group}
					<div class="group">
						<div class="tools">
							{#each group.tools as name}
								<button aria-label={name}>{@render tool(name)}</button>
							{/each}
						</div>
						<button class="group-name">{group.name} {@render caret()}</button>
					</div>
				{/each}
			</div>
		</div>
	</div>

	<main class="viewport">
		<svg class="canvas" viewBox="0 210 1920 843" preserveAspectRatio="xMidYMid slice" aria-label="Model view">
			<defs>
				<radialGradient id="floor" gradientUnits="userSpaceOnUse" cx="937" cy="525" r="165">
					<stop offset="0" stop-color="#a9aa8d" />
					<stop offset=".5" stop-color="#a2a387" />
					<stop offset="1" stop-color="#7f8573" />
				</radialGradient>
				<linearGradient id="top-face" x1="0" x2="0" y1="0" y2="1">
					<stop offset="0" stop-color="#4371aa" />
					<stop offset=".7" stop-color="#4170ab" />
					<stop offset="1" stop-color="#3763a0" />
				</linearGradient>
				<linearGradient id="left-face" x1="0" x2="1" y1="0" y2="0">
					<stop offset="0" stop-color="#4876ae" />
					<stop offset=".6" stop-color="#4573ac" />
					<stop offset="1" stop-color="#3c68a2" />
				</linearGradient>
				<linearGradient id="right-face" x1="1" x2="0" y1="0" y2="0">
					<stop offset="0" stop-color="#4876ae" />
					<stop offset=".6" stop-color="#4573ac" />
					<stop offset="1" stop-color="#3c68a2" />
				</linearGradient>
				<linearGradient id="low-face" x1="0" x2="0" y1="0" y2="1">
					<stop offset="0" stop-color="#4c78af" />
					<stop offset=".3" stop-color="#5682b6" />
					<stop offset="1" stop-color="#5a86b8" />
				</linearGradient>
				<linearGradient id="arc" x1="0" x2="1" y1="0" y2="0">
					<stop offset="0" stop-color="#222" stop-opacity="0" />
					<stop offset=".4" stop-color="#222" />
					<stop offset=".6" stop-color="#444" />
					<stop offset="1" stop-color="#888" stop-opacity="0.100" />
				</linearGradient>
				<linearGradient id="arc-light" x1="0" x2="1" y1="0" y2="0">
					<stop offset="0" stop-color="#ddd" stop-opacity="0" />
					<stop offset=".3" stop-color="#ddd" />
					<stop offset=".7" stop-color="#ddd" />
					<stop offset="1" stop-color="#ddd" stop-opacity="0" />
				</linearGradient>
				<clipPath id="inner"><path d="M839 392h198l59 186-158 115-159-115z" /></clipPath>
				<clipPath id="pentagon"><path d="M937.500 361 1096 476l-60 186H839l-60-186z" /></clipPath>
			</defs>

			<g stroke-width="1">
				{#each lines as n}
					{#if n % 5 !== 0}
						<path d="M{937.5 + n * step} -600V1700M-800 {527 + n * step}H2700" stroke="#000" stroke-opacity=".075" />
					{/if}
				{/each}
				{#each lines as n}
					{#if n % 5 === 0}
						<path d="M{937.5 + n * step} -600V1700M-800 {527 + n * step}H2700" stroke="#000" stroke-opacity=".2" />
					{/if}
				{/each}
			</g>
			<path d="M-800 527H2700" stroke="#ffa6a6" stroke-width="1.500" />
			<path d="M937.500-600V1700" stroke="#7df07d" stroke-width="1.500" />

			<path d="M937.500 257 1096 308l98 136v166l-98 135-158.500 51.500L779 745l-98.500-135V444L779 308z" fill="#4775ae" />
			<path d="M779 308l158.500-51L1096 308l-60 84H839z" fill="url(#top-face)" />
			<path d="M779 308l60 84-60 186-98.500 32V444z" fill="url(#left-face)" />
			<path d="M1096 308l-60 84 60 186 98 32V444z" fill="url(#right-face)" />
			<path d="M680.500 610 779 578l158.500 115v103.500L779 745z" fill="url(#low-face)" />
			<path d="M1194 610l-98-32-158.500 115v103.500L1096 745z" fill="url(#low-face)" />
			<path d="M839 392h197l60 186-158.500 115L779 578z" fill="#3867b8" />
			<g fill="none" stroke="#17427f" stroke-width="1.500">
				<path d="M937.500 257 1096 308l98 136v166l-98 135-158.500 51.500L779 745l-98.500-135V444L779 308z" />
				<path d="M839 392h197l60 186-158.500 115L779 578zM779 308l60 84M1096 308l-60 84M1194 610l-98-32M937.500 796.500V693M680.500 610 779 578" />
			</g>

			<g clip-path="url(#pentagon)">
				<path d="M770 350h340v220H770z" fill="#6d7263" />
				<path d="M770 570h340v100H770z" fill="#9a9a7f" />
				<g clip-path="url(#inner)">
					<path d="M770 350h340v350H770z" fill="url(#floor)" />
				</g>
				<path d="M839 392h197l60 186-158.500 115L779 578z" fill="none" stroke="#101a1c" stroke-width="1.500" />
			</g>
			<path d="M937.500 361 1096 476l-60 186H839l-60-186z" fill="none" stroke="#c3c9cf" stroke-width="4" stroke-linejoin="round" />

			<path d="M779 360.500h317" stroke="#1b4f94" />
			<path d="M779 360.500l18-4v8zM1096 360.500l-18-4v8z" fill="#1b4f94" />
			<text x="937" y="352" font-size="22" text-anchor="middle" fill="#1b4b8f">38.00</text>

			<path d="M968 453c70 84 190 84 254 2" fill="none" stroke="url(#arc)" stroke-width="3" />
			<path d="M968 451c70 84 190 84 254 2" fill="none" stroke="url(#arc-light)" stroke-width="1.500" />
			<path d="M987 361.500 1013 345v10h21v13h-21v10z" fill="#1590d2" stroke="#dce9f5" stroke-width="3" />
			<g fill="#b4c2d8" stroke="#15233c" stroke-width="3">
				<circle cx="1096" cy="360.500" r="8" />
				<path d="M1043 382h28v28h-28z" />
				<path d="M1092 425h11v19h10l-15.500 25L1082 444h10z" />
				<circle cx="1096" cy="516" r="15" />
			</g>
			<circle cx="1096" cy="516" r="4" fill="#15233c" />
		</svg>

		<aside class="browser">
			<div class="panel-head">
				<button class="collapse" aria-label="Collapse browser">
					<svg width="16" height="10" viewBox="0 0 16 10" fill="#333"><path d="M8 0v10L0 5zM16 0v10L8 5z" /></svg>
				</button>
				<h2>BROWSER</h2>
				<button class="round" aria-label="Hide browser">
					<svg width="14" height="14" viewBox="0 0 14 14"><circle cx="7" cy="7" r="7" fill="#333" /><path d="M3 7h8" stroke="#fff" stroke-width="2" /></svg>
				</button>
			</div>
			<div class="tree">
				<div class="scrollbar"><div class="thumb"></div></div>
				<ul>
					<li class="node root">
						<span class="arrow">
							<svg width="11" height="11" viewBox="0 0 11 11"><path d="M10 1v9H1z" fill="#555" stroke="#111" /></svg>
						</span>
						<div class="node-body">
							<span class="eye-cell">{@render eye('on')}</span>
							<span class="root-name">
								<svg width="22" height="22" viewBox="0 0 22 22"><path d="M1 21V5l3-4h7v12l3-3h7v7l-4 4z" fill="#e2e5ef" stroke="#6b6f7c" /><path d="M11 21v-8h7v8" fill="#c3c8d8" /></svg>
								FinalProject v1
							</span>
							<input type="radio" aria-label="Activate FinalProject v1" checked />
						</div>
					</li>
					{#each tree as node}
						<li class="node level-{node.level}" class:selected={node.selected}>
							<span class="arrow">
								{#if node.arrow === 'closed'}
									<svg width="11" height="14" viewBox="0 0 11 14"><path d="M1 1v12l2 0 7-6-7-6z" fill="#fff" stroke="#333" /></svg>
								{:else if node.arrow === 'open'}
									<svg width="11" height="11" viewBox="0 0 11 11"><path d="M10 1v9H1z" fill="#555" stroke="#111" /></svg>
								{/if}
							</span>
							<div class="node-body">
								{#if node.eye}
									<span class="eye-cell">{@render eye(node.eye)}</span>
								{/if}
								<span class="node-name" class:tight={node.icon === 'gear'} class:marked={node.marked}>
									{@render nodeIcon(node.icon)}
									<span class="node-label">{node.name}</span>
								</span>
							</div>
						</li>
					{/each}
				</ul>
			</div>
		</aside>

		<aside class="comments panel-head">
			<h2>COMMENTS</h2>
			<button class="round" aria-label="Show comments">
				<svg width="14" height="14" viewBox="0 0 14 14"><circle cx="7" cy="7" r="7" fill="#333" /><path d="M3 7h8M7 3v8" stroke="#fff" stroke-width="2" /></svg>
			</button>
		</aside>

		<div class="cube">
			<svg width="70" height="76" viewBox="0 0 70 76">
				<path d="M8.500 13.500h52v52h-52z" fill="#f0f0f0" stroke="#8c8c8c" />
				<path d="M19 23h32v32H19z" fill="#e4e7ea" />
				<text x="35" y="44" font-size="12" font-weight="700" fill="#909498" text-anchor="middle">TOP</text>
				<text x="8" y="12" font-size="14" fill="#6dea6d">Y</text>
				<text x="1" y="75" font-size="14" fill="#6c6cf5">Z</text>
				<text x="63" y="67" font-size="14" fill="#f57070">X</text>
			</svg>
		</div>

		<div class="float">
			<div class="float-bar">
				<span class="grip"></span>
				<input type="text" aria-label="X Distance" bind:value={fields[0].value} />
				<button aria-label="More">
					<svg width="8" height="20" viewBox="0 0 8 20" fill="#777"><circle cx="4" cy="3" r="2.300" /><circle cx="4" cy="10" r="2.300" /><circle cx="4" cy="17" r="2.300" /></svg>
				</button>
				<button aria-label="Set pivot">{@render axes()}</button>
			</div>
			<div class="tooltip">X Distance</div>
		</div>

		<form class="dialog" onsubmit={(e) => e.preventDefault()}>
			<div class="dialog-head">
				<svg width="14" height="14" viewBox="0 0 14 14"><circle cx="7" cy="7" r="7" fill="#333" /><path d="M3 7h8" stroke="#fff" stroke-width="2" /></svg>
				<h2>MOVE/COPY</h2>
				<svg width="16" height="10" viewBox="0 0 16 10" fill="#333"><path d="M0 0v10l8-5zM8 0v10l8-5z" /></svg>
			</div>
			<div class="rows">
				<div class="row">
					<label for="move-object">Move Object</label>
					<div class="combo">
						<svg width="24" height="24" viewBox="0 0 24 24">{@render solidShape()}</svg>
						<select id="move-object"><option>Bodies...</option></select>
						{@render caret()}
					</div>
				</div>
				<div class="row">
					<span class="label">Selection</span>
					<button class="picker" type="button">
						<svg width="14" height="24" viewBox="0 0 14 24"><path d="M1 2v18l4-4 3 7 3-1-3-7h5z" fill="#fff" stroke="#555" /></svg>
						6 selected
					</button>
					<button class="clear" type="button" aria-label="Clear selection">
						<svg width="14" height="14" viewBox="0 0 14 14"><path d="M1 1l12 12M13 1 1 13" stroke="#555" stroke-width="3" /></svg>
					</button>
				</div>
				<div class="row">
					<span class="label">Move Type</span>
					<div class="types">
						{#each moveTypes as type}
							<button type="button" aria-label={type} class:active={type === moveType} onclick={() => (moveType = type)}>
								{@render typeIcon(type)}
							</button>
						{/each}
					</div>
				</div>
				<div class="row">
					<span class="label">Set Pivot</span>
					<button class="pivot" type="button" aria-label="Set Pivot">{@render axes()}</button>
				</div>
				{#each fields as field}
					<div class="row">
						<label for={field.id}>{field.label}</label>
						<input id={field.id} type="text" bind:value={field.value} />
					</div>
				{/each}
				<div class="row disabled">
					<label for="create-copy">Create Copy</label>
					<input id="create-copy" type="checkbox" disabled />
				</div>
			</div>
			<div class="dialog-foot">
				<svg width="20" height="20" viewBox="0 0 20 20"><circle cx="10" cy="10" r="9.500" fill="#000" /><path d="M8.500 4h3v3h-3zM7 8h4.500v6H13v2H7v-2h1.500v-4H7z" fill="#fff" /></svg>
				<button type="submit">OK</button>
				<button type="button">Cancel</button>
			</div>
		</form>

		<div class="navbar">
			{#each navTools as item}
				<button class:plain={!item.menu} aria-label={item.name}>
					{@render navIcon(item.name)}
					{#if item.menu}{@render caret()}{/if}
				</button>
			{/each}
		</div>

		<div class="status">6 Bodies</div>
	</main>

	<footer class="timeline">
		<div class="playback">
			{#each playback as name}
				<button aria-label={name}>{@render playIcon(name)}</button>
			{/each}
		</div>
		<ol>
			{#each timeline as name, i}
				<li class:rolled={i === timeline.length - 1} class:folded={name === 'group'}>
					{@render timelineIcon(name)}
					{#if name === 'group'}
						<button class="expand" aria-label="Expand group">
							<svg width="15" height="15" viewBox="0 0 15 15"><path d="M0 0h15v15H0z" fill="#7a7a7a" /><path d="M7.500 3v9M3 7.500h9" stroke="#fff" stroke-width="2" /></svg>
						</button>
					{/if}
					{#if i === timeline.length - 1}
						<svg class="playhead" width="18" height="48" viewBox="0 0 18 48"><path d="M0 0h18v4l-7 7v37H8V11L0 4z" fill="#5c5c5c" /></svg>
					{/if}
				</li>
			{/each}
		</ol>
		<button class="settings" aria-label="Timeline settings">{@render gear(24)}</button>
	</footer>
</div>

<style>
	:global(body) {
		margin: 0;
	}

	.app {
		display: flex;
		flex-direction: column;
		height: 100vh;
		overflow: hidden;
		background: #f1f1f1;
		color: #333;
		font-family: 'Liberation Sans', Arial, sans-serif;
		font-size: 16px;
		line-height: 20px;
	}

	button {
		display: flex;
		align-items: center;
		justify-content: center;
		padding: 0;
		border: 0;
		background: none;
		color: inherit;
		font: inherit;
		cursor: pointer;
	}

	input,
	select {
		box-sizing: border-box;
		font: inherit;
		color: inherit;
	}

	svg {
		display: block;
		flex: none;
		overflow: visible;
	}

	h1,
	h2 {
		margin: 0;
		font-size: 16px;
		font-weight: 400;
		color: #666;
	}

	ul,
	ol {
		margin: 0;
		padding: 0;
		list-style: none;
	}

	.caret {
		flex: none;
		border: 5px solid transparent;
		border-top: 7px solid #333;
		border-bottom: 0;
	}

	/* title bar */
	.titlebar {
		display: flex;
		align-items: center;
		gap: 8px;
		height: 34px;
		padding: 0 27px 0 2px;
		background: #f2f2f2;
	}

	.titlebar h1 {
		flex: 1;
		font-family: 'Open Sans', 'Segoe UI', sans-serif;
		font-size: 17px;
		color: #888;
	}

	.window-buttons {
		display: flex;
		gap: 52px;
	}

	/* document bar */
	.docbar {
		display: flex;
		height: 48px;
		box-sizing: border-box;
		padding-top: 6px;
		background: #cbcbcb;
	}

	.quick {
		display: flex;
		align-items: center;
		gap: 29px;
		padding: 0 11px 6px 13px;
	}

	.quick button {
		gap: 8px;
	}

	.quick .caret {
		border-top-color: #666;
	}

	.quick .dim .caret {
		border-top-color: #929292;
	}

	.history {
		display: flex;
		gap: 20px;
	}

	.home-tab,
	.new-tab {
		background: #b9b9b9;
		border-radius: 6px 6px 0 0;
	}

	.home-tab {
		width: 58px;
		padding: 4px 0 0 4px;
		margin-right: 6px;
	}

	.new-tab {
		width: 42px;
		margin-left: 6px;
	}

	.doc-tab {
		display: flex;
		flex: 1;
		padding: 0 5px 0 12px;
		border-radius: 6px 6px 0 0;
		background: #f1f1f1;
	}

	.doc-name {
		display: flex;
		flex: 1;
		align-items: center;
		justify-content: center;
		gap: 7px;
		padding-top: 4px;
		font-size: 18px;
	}

	.doc-close {
		align-items: flex-end;
		box-sizing: border-box;
		width: 22px;
		height: 28px;
		border: 1px solid #d0d0d0;
		border-radius: 4px;
		background: #fff;
	}

	.account {
		display: flex;
		align-items: center;
		gap: 25px;
		padding: 0 21px 7px 18px;
	}

	.account button {
		gap: 6px;
	}

	.account .bell {
		margin-left: 11px;
	}

	.account .avatar {
		margin-left: 7px;
	}

	/* ribbon */
	.ribbon {
		display: flex;
		gap: 10px;
		padding: 0 17px;
		border-bottom: 1px solid #cfcfcf;
		margin-bottom: 5px;
	}

	.workspace {
		box-sizing: border-box;
		width: 165px;
		height: 92px;
		margin: 15px 0;
		gap: 9px;
		border: 2px solid #ccc;
		border-radius: 5px;
		font-weight: 700;
	}

	.tabs {
		display: flex;
		gap: 33px;
		padding-left: 14px;
	}

	.tabs button {
		padding: 7px 19px 4px;
		border-bottom: 4px solid transparent;
	}

	.tabs .active {
		border-color: #1390c9;
		color: #1390c9;
		font-weight: 700;
	}

	.groups {
		display: flex;
		padding-top: 5px;
	}

	.group {
		display: flex;
		flex-direction: column;
		align-items: center;
		height: 76px;
		gap: 10px;
		padding: 0 17px;
		border-right: 1px solid #ccc;
	}

	.group:first-child {
		padding-left: 14px;
	}

	.group:last-child {
		border: 0;
	}

	.tools {
		display: flex;
		gap: 16px;
	}

	.group-name {
		gap: 4px;
		padding: 0 4px;
	}

	/* viewport */
	.viewport {
		position: relative;
		flex: 1;
		min-height: 0;
		overflow: hidden;
		background: #fff;
	}

	.canvas {
		position: absolute;
		inset: 0;
		width: 100%;
		height: 100%;
	}

	.panel-head {
		display: flex;
		align-items: center;
		box-sizing: border-box;
		height: 37px;
		padding: 1px 16px 0 4px;
		border: 1px solid #c8c8c8;
		border-bottom-width: 2px;
		background: #f1f1f1;
	}

	.panel-head h2 {
		flex: 1;
		padding-left: 11px;
	}

	.browser {
		position: absolute;
		left: 6px;
		top: 6px;
		width: 449px;
	}

	.collapse {
		width: 22px;
		height: 22px;
		border: 1px solid #999;
		background: #ddd;
		box-sizing: border-box;
	}

	.comments {
		position: absolute;
		left: 6px;
		bottom: 6px;
		width: 449px;
		padding-left: 26px;
	}

	.tree {
		display: flex;
		gap: 13px;
		padding: 8px 0 0 6px;
	}

	.scrollbar {
		width: 9px;
		background: #c8c8c8;
	}

	.thumb {
		height: 55%;
		border-radius: 4px;
		background: #9a9a9a;
	}

	.tree ul {
		display: flex;
		flex-direction: column;
		gap: 6px;
	}

	.node {
		display: flex;
		align-items: center;
		height: 30px;
	}

	.level-1 {
		padding-left: 26px;
	}

	.level-2 {
		padding-left: 53px;
	}

	.arrow {
		width: 27px;
	}

	.node-body {
		display: flex;
		align-items: center;
		height: 30px;
		background: #f1f1f1;
	}

	.eye-cell {
		display: flex;
		align-items: center;
		height: 30px;
		padding: 0 4px;
		margin-right: 5px;
	}

	.node-name {
		display: flex;
		align-items: center;
		gap: 21px;
		height: 30px;
		padding: 0 15px 0 5px;
	}

	.node-name.tight {
		gap: 19px;
	}

	.node-name.marked {
		background: repeating-linear-gradient(125deg, #7d8bb0 0 3px, transparent 3px 8px) 0 22px / 100% 6px no-repeat;
	}

	.selected .node-body {
		background: none;
	}

	.selected .eye-cell {
		background: #f1f1f1;
	}

	.selected .node-name {
		background: #0696d7;
		color: #fff;
		font-weight: 700;
	}

	.root-name {
		display: flex;
		align-items: center;
		gap: 21px;
		height: 24px;
		padding: 0 18px 0 6px;
		background: #999;
		color: #fff;
		font-weight: 700;
	}

	.root input {
		appearance: none;
		width: 20px;
		height: 20px;
		margin: 0 10px 0 7px;
		border: 1px solid #555;
		border-radius: 50%;
		background: radial-gradient(circle, #333 0 4px, #d3d8e4 5px);
	}

	.cube {
		position: absolute;
		right: 28px;
		top: 24px;
	}

	.status {
		position: absolute;
		right: 26px;
		bottom: 14px;
		font-weight: 700;
	}

	/* value box that follows the manipulator */
	.float {
		position: absolute;
		left: 1274px;
		top: 210px;
	}

	.float-bar {
		display: flex;
		align-items: center;
		gap: 17px;
		height: 32px;
		padding-right: 12px;
		margin-bottom: 9px;
		background: #f1f1f1;
	}

	.grip {
		width: 5px;
		height: 28px;
		margin: 0 -8px 0 6px;
		border-right: 1px solid #ccc;
		background: repeating-linear-gradient(45deg, #ccc 0 1px, #f1f1f1 1px 3px);
	}

	.float-bar input {
		width: 105px;
		height: 30px;
		padding: 0 11px;
		border: 1px solid #bbb;
	}

	.tooltip {
		display: inline-block;
		padding: 8px 24px;
		border-radius: 18px;
		background: #505050;
		color: #fff;
		font-family: 'Open Sans', 'Segoe UI', sans-serif;
		font-size: 17px;
		font-weight: 600;
	}

	/* move dialog */
	.dialog {
		position: absolute;
		right: 7px;
		top: 126px;
		width: 374px;
		box-sizing: border-box;
		border: 1px solid #c8c8c8;
		border-bottom-width: 2px;
		background: #f1f1f1;
	}

	.dialog-head {
		display: flex;
		align-items: center;
		height: 35px;
		padding: 0 6px 0 16px;
		gap: 7px;
		border-bottom: 2px solid #c8c8c8;
	}

	.dialog-head h2 {
		flex: 1;
	}

	.row {
		display: flex;
		align-items: center;
		height: 45px;
		padding-left: 18px;
	}

	.row label,
	.row .label {
		width: 116px;
	}

	.row input[type='text'],
	.combo {
		box-sizing: border-box;
		width: 190px;
		height: 39px;
		padding: 0 4px;
		border: 1px solid #bbb;
		background: #fff;
	}

	.combo {
		display: flex;
		align-items: center;
		gap: 5px;
		padding-right: 6px;
	}

	.combo select {
		flex: 1;
		appearance: none;
		padding: 0;
		border: 0;
		background: none;
	}

	.picker {
		width: 118px;
		height: 40px;
		gap: 7px;
		background: #0696d7;
		color: #fff;
	}

	.clear {
		margin-left: 16px;
	}

	.types {
		display: flex;
		gap: 9px;
	}

	.types button {
		width: 34px;
		height: 40px;
	}

	.types .active {
		background: #0696d7;
	}

	.pivot {
		margin-left: 3px;
	}

	.row input[type='checkbox'] {
		appearance: none;
		width: 20px;
		height: 20px;
		margin: 0 0 0 7px;
		border: 1px solid #999;
		border-radius: 4px;
		background: linear-gradient(#fafafa, #e2e2e2);
	}

	.disabled {
		color: #aaa;
	}

	.dialog-foot {
		display: flex;
		align-items: center;
		gap: 15px;
		height: 53px;
		padding: 0 16px 0 11px;
		border-top: 2px solid #c8c8c8;
	}

	.dialog-foot svg {
		margin-right: auto;
	}

	.dialog-foot button {
		box-sizing: border-box;
		width: 90px;
		height: 29px;
		border: 1px solid #aaa;
		background: #e6e6e6;
		color: #666;
		font-size: 18px;
	}

	/* navigation bar */
	.navbar {
		position: absolute;
		left: 50%;
		bottom: 9px;
		display: flex;
		align-items: center;
		gap: 10px;
		height: 36px;
		padding: 0 6px;
		transform: translateX(-50%);
		background: #f1f1f1;
	}

	.navbar button {
		gap: 5px;
	}

	.navbar .plain {
		margin-right: 7px;
	}

	/* timeline */
	.timeline {
		display: flex;
		height: 74px;
		border-top: 1px solid #ccc;
	}

	.playback {
		display: flex;
		gap: 18px;
		width: 198px;
		padding: 24px 0 0 15px;
		align-items: flex-start;
	}

	.timeline ol {
		display: flex;
		height: 62px;
		background: linear-gradient(#c8c8c8, #c8c8c8) 18px 100% / calc(100% - 36px) 3px no-repeat;
	}

	.timeline li {
		position: relative;
		display: flex;
		flex-direction: column;
		align-items: center;
		width: 36px;
		padding-top: 22px;
	}

	.timeline li::after {
		content: '';
		width: 3px;
		height: 11px;
		margin-top: 3px;
		background: #c8c8c8;
	}

	.timeline .folded::after {
		display: none;
	}

	.expand {
		position: absolute;
		left: 8px;
		bottom: -6px;
	}

	.playhead {
		position: absolute;
		left: -9px;
		top: 14px;
	}

	.rolled > svg:first-child {
		opacity: 0.2;
	}

	.settings {
		margin: 0 20px 6px auto;
	}
</style>
